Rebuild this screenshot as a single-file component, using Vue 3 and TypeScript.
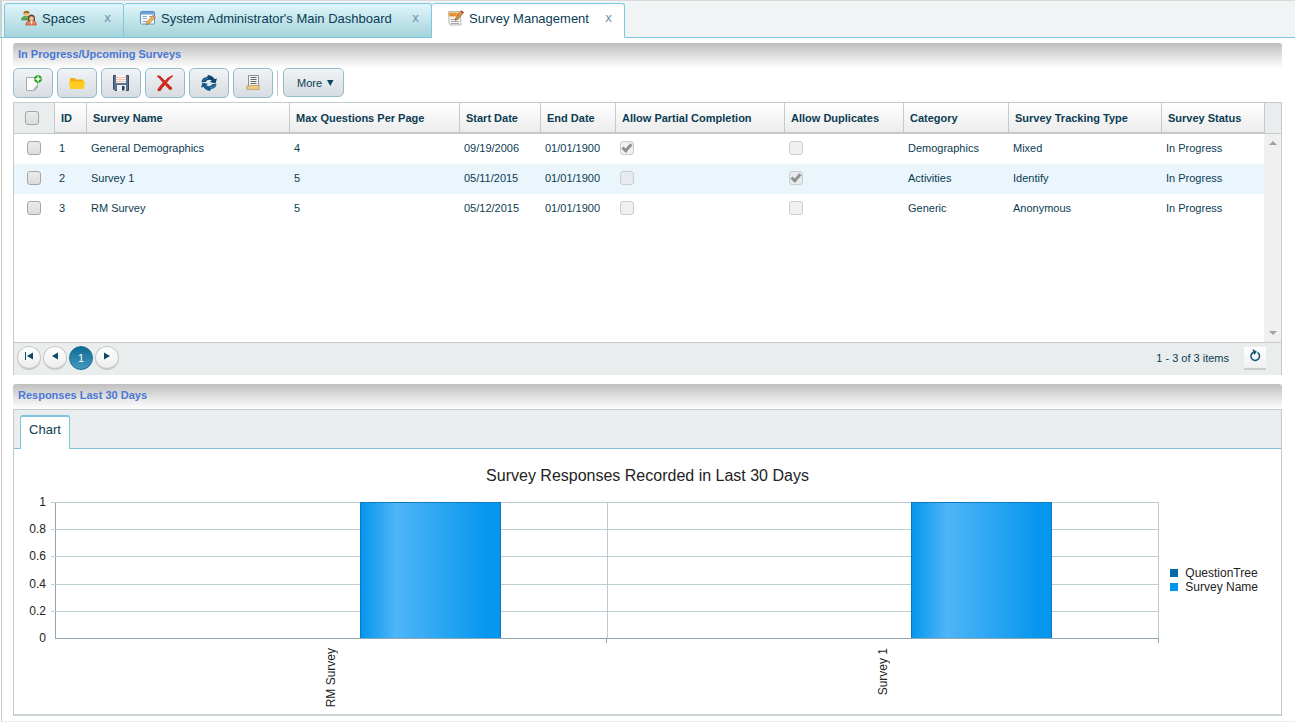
<script setup lang="ts">
import { ref } from 'vue'

interface Survey {
  id: number
  name: string
  maxQuestions: number
  start: string
  end: string
  partial: boolean
  duplicates: boolean
  category: string
  tracking: string
  status: string
  selected: boolean
}

const surveys = ref<Survey[]>([
  { id: 1, name: 'General Demographics', maxQuestions: 4, start: '09/19/2006', end: '01/01/1900', partial: true, duplicates: false, category: 'Demographics', tracking: 'Mixed', status: 'In Progress', selected: false },
  { id: 2, name: 'Survey 1', maxQuestions: 5, start: '05/11/2015', end: '01/01/1900', partial: false, duplicates: true, category: 'Activities', tracking: 'Identify', status: 'In Progress', selected: false },
  { id: 3, name: 'RM Survey', maxQuestions: 5, start: '05/12/2015', end: '01/01/1900', partial: false, duplicates: false, category: 'Generic', tracking: 'Anonymous', status: 'In Progress', selected: false },
])

const headings = ['ID', 'Survey Name', 'Max Questions Per Page', 'Start Date', 'End Date', 'Allow Partial Completion', 'Allow Duplicates', 'Category', 'Survey Tracking Type', 'Survey Status']
const ticks = ['1', '0.8', '0.6', '0.4', '0.2', '0']
const categories = [
  { label: 'RM Survey', value: 1 },
  { label: 'Survey 1', value: 1 },
]

function toggleAll(event: Event) {
  const on = (event.target as HTMLInputElement).checked
  surveys.value.forEach((s) => (s.selected = on))
}
</script>

<template>
  <div class="page">
    <nav class="tabs" aria-label="Open spaces">
      <div class="tab spaces">
        <button type="button" class="tab-name">
          <svg width="16" height="16" viewBox="0 0 16 16" aria-hidden="true">
            <path d="M0.500 9.500 Q1 6.500 4 6.500 H7.500 L9 10 H0.500Z" fill="#5faa4a" stroke="#3f8a3a" stroke-width=".7" />
            <circle cx="5.500" cy="3.700" r="2.600" fill="#f0bd85" />
            <path d="M2.600 4.500 Q2 .8 5.500 .8 Q8.800 .8 8.400 4 Q7 2.500 5 3 Q3.500 3 2.600 4.500Z" fill="#a9681f" />
            <path d="M4.800 15 Q4.800 11.500 8 11 H12.500 Q15.500 11.500 15.500 15Z" fill="#e98055" stroke="#b8542e" stroke-width=".7" />
            <path d="M7 11 Q6.200 4.500 10.500 4.500 Q14.800 4.500 13.800 11Z" fill="#5c3a24" />
            <circle cx="10.500" cy="8.700" r="2.400" fill="#f3c18f" />
            <path d="M9.300 11 L10.500 15 L11.800 11Z" fill="#f7e7dc" />
          </svg>
          Spaces
        </button>
        <button type="button" class="tab-close" aria-label="Close Spaces">x</button>
      </div>
      <div class="tab dashboard">
        <button type="button" class="tab-name">
          <svg width="16" height="16" viewBox="0 0 16 16" aria-hidden="true">
            <rect x=".5" y="1.500" width="14" height="12.500" rx="1" fill="#f8fbfd" stroke="#5b91c4" />
            <rect x="1" y="2" width="13" height="2.500" fill="#6ca2d6" />
            <path d="M2.500 6.500H7M2.500 8.500H7M2.500 11.500H7M9 6.500H12.500" stroke="#91abc4" />
            <path d="M6.300 14.700 L7.200 11.500 L13.200 5.200 L15.300 7.200 L9.300 13.500Z" fill="#f6b64e" stroke="#9f6632" stroke-width=".7" />
            <path d="M12.500 6 L13.600 4.900 L15.600 6.900 L14.500 8Z" fill="#d97972" />
          </svg>
          System Administrator's Main Dashboard
        </button>
        <button type="button" class="tab-close" aria-label="Close dashboard">x</button>
      </div>
      <div class="tab management active">
        <button type="button" class="tab-name" aria-current="page">
          <svg width="16" height="16" viewBox="0 0 16 16" aria-hidden="true">
            <path d="M.5 1.500 H12.500 L13 15 H2 L1 13Z" fill="#f2f2f0" stroke="#b9b9b5" />
            <path d="M2.500 9.500H10M3 11.500H11M3 13.500H11" stroke="#aaa" />
            <path d="M1 2.500H11V6.500H1Z" fill="#f2a43a" />
            <path d="M2 4H8M2 5.500H7" stroke="#cf7b20" stroke-width=".6" />
            <path d="M7 10.500 L8.200 7.300 L13.200 .9 L15.500 2.600 L10.200 9Z" fill="#dc934c" stroke="#8d552d" stroke-width=".7" />
            <path d="M12.500 1.800 L13.500 .5 L15.900 2.200 L14.800 3.500Z" fill="#b44e40" />
          </svg>
          Survey Management
        </button>
        <button type="button" class="tab-close" aria-label="Close Survey Management">x</button>
      </div>
    </nav>

    <main class="content">
      <section>
        <h2 class="panel-title">In Progress/Upcoming Surveys</h2>
        <div class="toolbar">
          <button type="button" class="tool" aria-label="New">
            <svg width="18" height="18" viewBox="0 0 18 18" aria-hidden="true">
              <path d="M2.500 3.500H13.500V13L10.500 16.500H2.500Z" fill="#fbfbfb" stroke="#aaa" />
              <path d="M13.500 12.500 Q10.500 12 10 16.500Z" fill="#ddd" stroke="#999" stroke-width=".8" />
              <circle cx="14" cy="5" r="3.800" fill="#27a322" />
              <path d="M14 2.500V7.500M11.500 5H16.500" stroke="#fff" stroke-width="1.500" />
            </svg>
          </button>
          <button type="button" class="tool" aria-label="Open">
            <svg width="18" height="18" viewBox="0 0 18 18" aria-hidden="true">
              <path d="M2 14V5Q2 4 3 4H6.500L8 5.500H14.500Q15.500 5.500 15.500 7V14Z" fill="#f3ae10" />
              <path d="M1 7.500H17L16 14Q15.800 15 15 15H3Q2.200 15 2 14Z" fill="#ffcd20" />
            </svg>
          </button>
          <button type="button" class="tool" aria-label="Save">
            <svg width="18" height="18" viewBox="0 0 18 18" aria-hidden="true">
              <path d="M1.500 1.500H16.500V16.500H3L1.500 15Z" fill="#59718f" stroke="#344965" />
              <rect x="4" y="1" width="10" height="8" fill="#fff3ee" />
              <path d="M4 3.500H14M4 5.500H14M4 7.500H14" stroke="#e8b7a6" stroke-width=".8" />
              <rect x="5" y="11" width="9" height="6" fill="#edf1f5" />
              <rect x="10" y="12" width="2.500" height="4.500" fill="#273c57" />
            </svg>
          </button>
          <button type="button" class="tool" aria-label="Delete">
            <svg width="18" height="18" viewBox="0 0 18 18" aria-hidden="true">
              <path d="M1 2 Q4 1 6 4 L9 7 Q12 3 16.500 1.500 L17 2 Q13 5 10.500 8.700 L16 14 Q15.500 16.500 13.500 15.500 L9 10.700 Q6 14 4.500 16.500 Q2 17.500 1.500 16 Q4 11.500 7 8.700 Q4.500 5 1 2Z" fill="#da2518" stroke="#aa1c14" stroke-width=".5" />
            </svg>
          </button>
          <button type="button" class="tool" aria-label="Refresh">
            <svg width="18" height="18" viewBox="0 0 18 18" aria-hidden="true">
              <path d="M1.500 8 Q2 3.500 7 3 L8 1 Q12.500 1.500 14.500 5 L17 4.500 L15.500 9.500 L10 8 L11.800 6.500 Q8 4.500 5.500 8Z" fill="#0f4773" />
              <path d="M16.500 10 Q16 14.500 11 15 L10 17 Q5.500 16.500 3.500 13 L1 13.500 L2.500 8.500 L8 10 L6.200 11.500 Q10 13.500 12.500 10Z" fill="#15598c" />
              <path d="M3 7 Q4 4.500 8 4.200M15 11 Q14 13.500 10 13.800" fill="none" stroke="#5d9cc4" stroke-width=".8" />
            </svg>
          </button>
          <button type="button" class="tool" aria-label="Audit">
            <svg width="18" height="18" viewBox="0 0 18 18" aria-hidden="true">
              <path d="M4.500 1.500H14.500V13H4.500Z" fill="#f5f5f5" stroke="#8b9094" />
              <path d="M6.500 3.500H12.500M6.500 5.500H12.500M6.500 7.500H12.500M6.500 9.500H12.500" stroke="#666" />
              <path d="M3 12 H6 L7 11 L8 12 L9 11 L10 12 L11 11 L12 12 L13 11 L14 12 L15 11.500V16L13.500 15 L12 16 L10.500 15 L9 16 L7.500 15 L6 15.500H3Z" fill="#f3ce86" stroke="#b28642" stroke-width=".7" />
            </svg>
          </button>
          <span class="separator"></span>
          <button type="button" class="tool more">
            More
            <svg width="8" height="8" viewBox="0 0 8 8" aria-hidden="true"><path d="M1 1H7.500L4.300 7Z" fill="#0b4560" /></svg>
          </button>
        </div>

        <div class="grid">
          <div class="grid-body">
            <div class="table-area">
              <table>
                <colgroup>
                  <col class="c-check" /><col class="c-id" /><col class="c-name" /><col class="c-max" /><col class="c-start" /><col class="c-end" />
                  <col class="c-partial" /><col class="c-dup" /><col class="c-cat" /><col class="c-track" /><col class="c-status" />
                </colgroup>
                <thead>
                  <tr>
                    <th class="pick"><input type="checkbox" aria-label="Select all" @change="toggleAll" /></th>
                    <th v-for="h in headings" :key="h" scope="col">{{ h }}</th>
                  </tr>
                </thead>
                <tbody>
                  <tr v-for="s in surveys" :key="s.id">
                    <td class="pick"><input v-model="s.selected" type="checkbox" :aria-label="`Select ${s.name}`" /></td>
                    <td>{{ s.id }}</td>
                    <td>{{ s.name }}</td>
                    <td>{{ s.maxQuestions }}</td>
                    <td>{{ s.start }}</td>
                    <td>{{ s.end }}</td>
                    <td><input type="checkbox" disabled :checked="s.partial" aria-label="Allow partial completion" /></td>
                    <td><input type="checkbox" disabled :checked="s.duplicates" aria-label="Allow duplicates" /></td>
                    <td>{{ s.category }}</td>
                    <td>{{ s.tracking }}</td>
                    <td>{{ s.status }}</td>
                  </tr>
                </tbody>
              </table>
            </div>
            <div class="scroll">
              <div class="scroll-head"></div>
              <div class="scroll-track"><i class="up"></i><i class="down"></i></div>
            </div>
          </div>
          <div class="pager">
            <div class="pages">
              <button type="button" class="round" aria-label="First page">
                <svg width="8" height="8" viewBox="0 0 8 8" aria-hidden="true"><path d="M.5 0V8" stroke="#0d4a66" /><path d="M8 .5V7.500L2 4Z" fill="#0d4a66" /></svg>
              </button>
              <button type="button" class="round" aria-label="Previous page">
                <svg width="8" height="8" viewBox="0 0 8 8" aria-hidden="true"><path d="M7 .5V7.500L1 4Z" fill="#0d4a66" /></svg>
              </button>
              <button type="button" class="round current" aria-current="page">1</button>
              <button type="button" class="round" aria-label="Next page">
                <svg width="8" height="8" viewBox="0 0 8 8" aria-hidden="true"><path d="M1 .5V7.500L7 4Z" fill="#0d4a66" /></svg>
              </button>
            </div>
            <span class="count">1 - 3 of 3 items</span>
            <button type="button" class="reload" aria-label="Reload">
              <svg width="12" height="13" viewBox="0 0 12 13" aria-hidden="true">
                <path d="M8.500 3.500 A4.300 4.300 0 1 1 4.500 3.200" fill="none" stroke="#0f5672" stroke-width="1.500" />
                <path d="M3.500 0 L8 2.700 L5 6Z" fill="#0f5672" />
              </svg>
            </button>
          </div>
        </div>
      </section>

      <section class="responses">
        <h2 class="panel-title">Responses Last 30 Days</h2>
        <div class="chart-panel">
          <div class="strip"><button type="button" class="chart-tab">Chart</button></div>
          <h3 class="chart-title">Survey Responses Recorded in Last 30 Days</h3>
          <div class="chart">
            <div class="y-labels"><span v-for="t in ticks" :key="t">{{ t }}</span></div>
            <div class="plot-column">
              <div class="plot">
                <div class="lines"><i v-for="n in 5" :key="n"></i></div>
                <div class="bars">
                  <div v-for="c in categories" :key="c.label" class="category">
                    <div class="bar" :style="{ height: c.value * 100 + '%' }"></div>
                  </div>
                </div>
              </div>
              <div class="x-labels">
                <div v-for="c in categories" :key="c.label"><span>{{ c.label }}</span></div>
              </div>
            </div>
            <ul class="legend">
              <li><i class="dark"></i>QuestionTree</li>
              <li><i></i>Survey Name</li>
            </ul>
          </div>
        </div>
      </section>
    </main>
  </div>
</template>

<style>
body {
  margin: 0;
  background: #fff;
}
</style>

<style scoped>
* {
  box-sizing: border-box;
}
.page {
  min-height: 100vh;
  display: flex;
  flex-direction: column;
  font-family: "Liberation Sans", Arial, sans-serif;
  font-size: 11px;
  color: #0b3c53;
  border-top: 1px solid #d9d9d9;
}
button {
  font: inherit;
  color: inherit;
  padding: 0;
  margin: 0;
  border: 0;
  background: none;
  cursor: pointer;
}
svg {
  display: block;
  flex: none;
}
.tabs {
  display: flex;
  height: 37px;
  padding: 2px 0 0 4px;
  background: linear-gradient(90deg, #b5dde6 1px, #cfcfcf 1px, #cfcfcf 2px, transparent 2px), #f0f4f5;
  box-shadow: inset 0 -1px #7cc6df;
}
.tab {
  display: flex;
  align-items: center;
  justify-content: space-between;
  padding: 0 12px 5px 16px;
  border: 1px solid #7cc6df;
  border-radius: 3px 3px 0 0;
  background: linear-gradient(#e0f6fb, #a5d3da);
  font-size: 13px;
}
.tab + .tab {
  border-left: 0;
}
.spaces {
  min-width: 120px;
}
.dashboard {
  min-width: 308px;
}
.management {
  min-width: 193px;
}
.tab.active {
  background: #fff;
  border-bottom-color: #fff;
}
.tab-name {
  display: flex;
  align-items: center;
  gap: 5px;
  white-space: nowrap;
}
.tab-close {
  color: #7196a7;
  font-family: "DejaVu Sans", sans-serif;
  font-size: 12px;
}
.content {
  flex: 1;
  display: flex;
  flex-direction: column;
  margin-left: 1px;
  padding: 5px 13px 5px 11px;
  border-left: 1px solid #cbcbcb;
  border-bottom: 1px solid #eee;
}
.panel-title {
  margin: 0;
  height: 25px;
  padding: 0 5px;
  font-size: 11px;
  line-height: 23px;
  color: #4a77d4;
  border-radius: 3px 3px 0 0;
  background: linear-gradient(#bfbfbf, #fff);
}
.toolbar {
  display: flex;
  gap: 4px;
  height: 34px;
}
.tool {
  width: 40px;
  height: 30px;
  display: flex;
  align-items: center;
  justify-content: center;
  border: 1px solid #94bccc;
  border-radius: 5px;
  background: linear-gradient(#f1f4f6, #d6dce1);
}
.separator {
  width: 1px;
  height: 26px;
  margin-top: 2px;
  background: #c4c9cb;
}
.more {
  width: 61px;
  height: 29px;
  gap: 4px;
  padding-left: 4px;
  margin-left: 1px;
}
.grid {
  border: 1px solid #c5cbcd;
  border-bottom: 0;
}
.grid-body {
  display: flex;
  min-height: 239px;
}
.table-area {
  flex: 1;
}
table {
  width: 100%;
  table-layout: fixed;
  border-collapse: separate;
  border-spacing: 0;
}
.c-check { width: 40px; }
.c-id { width: 32px; }
.c-name { width: 203px; }
.c-max { width: 170px; }
.c-start { width: 81px; }
.c-end { width: 75px; }
.c-partial { width: 169px; }
.c-dup { width: 119px; }
.c-cat { width: 105px; }
.c-track { width: 153px; }
.c-status { width: 103px; }
th,
td {
  height: 30px;
  padding: 0 0 2px 5px;
  text-align: left;
  white-space: nowrap;
}
th {
  height: 31px;
  padding: 0 0 0 6px;
  border-left: 1px solid #c5cbcd;
  border-bottom: 2px solid #c5c9ca;
  background: linear-gradient(#fff, #ececec);
}
th.pick {
  border-left: 0;
  border-bottom: 1px solid #c5cbcd;
  background: #e9edee;
  padding-left: 11px;
}
td.pick {
  padding-left: 13px;
}
tbody tr:nth-child(even) {
  background: #eaf5fc;
}
input[type="checkbox"] {
  appearance: none;
  display: grid;
  place-items: center;
  width: 14px;
  height: 14px;
  margin: 0;
  border: 1px solid #a6a6a6;
  border-radius: 3px;
  background: linear-gradient(#ececec, #dcdcdc);
}
input[type="checkbox"]:disabled {
  border-color: #ccc;
  background: rgba(225, 225, 225, 0.5);
}
input[type="checkbox"]:checked::after {
  content: "";
  box-sizing: border-box;
  width: 6px;
  height: 10px;
  margin-top: -2px;
  border: solid #919191;
  border-width: 0 3px 3px 0;
  transform: rotate(42deg);
}
.scroll {
  width: 17px;
  display: flex;
  flex-direction: column;
}
.scroll-head {
  height: 31px;
  background: #e9edee;
  border-left: 1px solid #c5cbcd;
  border-bottom: 1px solid #c5cbcd;
}
.scroll-track {
  flex: 1;
  display: flex;
  flex-direction: column;
  align-items: center;
  justify-content: space-between;
  padding: 7px 0;
  background: #f0f0f0;
}
.up,
.down {
  border: 4px solid transparent;
  border-top-width: 0;
  border-bottom-color: #a0a0a0;
}
.down {
  border-width: 4px 4px 0;
  border-top-color: #a0a0a0;
}
.pager {
  display: flex;
  align-items: center;
  height: 33px;
  padding: 0 15px 2px 3px;
  border-top: 1px solid #c5cbcd;
  background: #e9edee;
}
.pages {
  display: flex;
  flex: 1;
  gap: 2px;
}
.round {
  width: 24px;
  height: 24px;
  display: grid;
  place-items: center;
  padding-bottom: 4px;
  border: 1px solid #c8c8c8;
  border-bottom-width: 2px;
  border-radius: 50%;
  background: linear-gradient(#fff, #ececec);
}
.round.current {
  padding: 0;
  color: #fff;
  border: 1px solid #157199;
  background: linear-gradient(#0f6c95, #4598bd);
}
.reload {
  width: 22px;
  height: 23px;
  margin-left: 15px;
  display: flex;
  justify-content: center;
  padding-top: 2px;
  align-items: flex-start;
  border-bottom: 2px solid #ccc;
  background: linear-gradient(#fff, #f0f0f0);
}
.responses {
  flex: 1;
  display: flex;
  flex-direction: column;
  margin-top: 9px;
}
.chart-panel {
  flex: 1;
  border: 1px solid #c5cbcd;
  border-bottom: 2px solid #ccd3d4;
}
.strip {
  display: flex;
  height: 39px;
  padding: 5px 6px 0;
  background: #e9edee;
  box-shadow: inset 0 -1px #7fc4dc;
}
.chart-tab {
  width: 50px;
  font-size: 13px;
  padding-bottom: 8px;
  border: 1px solid #7cc6df;
  border-top-width: 2px;
  border-bottom: 0;
  border-radius: 3px 3px 0 0;
  background: #fff;
}
.chart-title {
  margin: 18px 0 17px;
  text-align: center;
  font-size: 16px;
  line-height: 18px;
  font-weight: normal;
  color: #232323;
}
.chart {
  display: flex;
  padding: 0 23px 0 0;
  font-size: 12px;
  color: #232323;
}
.y-labels {
  width: 32px;
  height: 150px;
  margin-top: -7px;
  display: flex;
  flex-direction: column;
  justify-content: space-between;
  text-align: right;
  line-height: 14px;
}
.plot-column {
  flex: 1;
  margin-left: 9px;
}
.plot {
  display: grid;
  height: 137px;
  border-left: 1px solid #8fa8b0;
  border-bottom: 1px solid #8fa8b0;
}
.lines,
.bars {
  grid-area: 1 / 1;
  display: grid;
}
.lines {
  grid-template-rows: repeat(5, 1fr);
  margin-left: -5px;
}
.lines i {
  border-top: 1px solid #becdd2;
}
.bars {
  grid-template-columns: 1fr 1fr;
}
.category {
  display: grid;
  grid-template-columns: 0.75fr 1fr 0.4fr 1fr 0.75fr;
  align-items: end;
  border-right: 1px solid #becdd2;
}
.bar {
  grid-column: 4;
  border: 1px solid #0a7bc2;
  border-bottom: 0;
  background: linear-gradient(90deg, #0596ee, #4eb5f7 25%, #0596ee 92%);
}
.x-labels {
  display: grid;
  grid-template-columns: 1fr 1fr;
  height: 74px;
}
.x-labels div {
  display: flex;
  justify-content: center;
  align-items: flex-start;
  padding: 5px 0 0 0;
  background: linear-gradient(#8fa8b0, #8fa8b0) right top / 1px 4px no-repeat;
}
.x-labels span {
  writing-mode: vertical-rl;
  transform: rotate(180deg);
  padding-bottom: 4px;
  line-height: 14px;
}
.legend {
  list-style: none;
  margin: 64px 0 0 11px;
  padding: 0;
}
.legend li {
  display: flex;
  align-items: center;
  gap: 7px;
  line-height: 14px;
}
.legend i {
  width: 8px;
  height: 8px;
  background: #0496ee;
}
.legend .dark {
  background: #0568a8;
}
</style>
